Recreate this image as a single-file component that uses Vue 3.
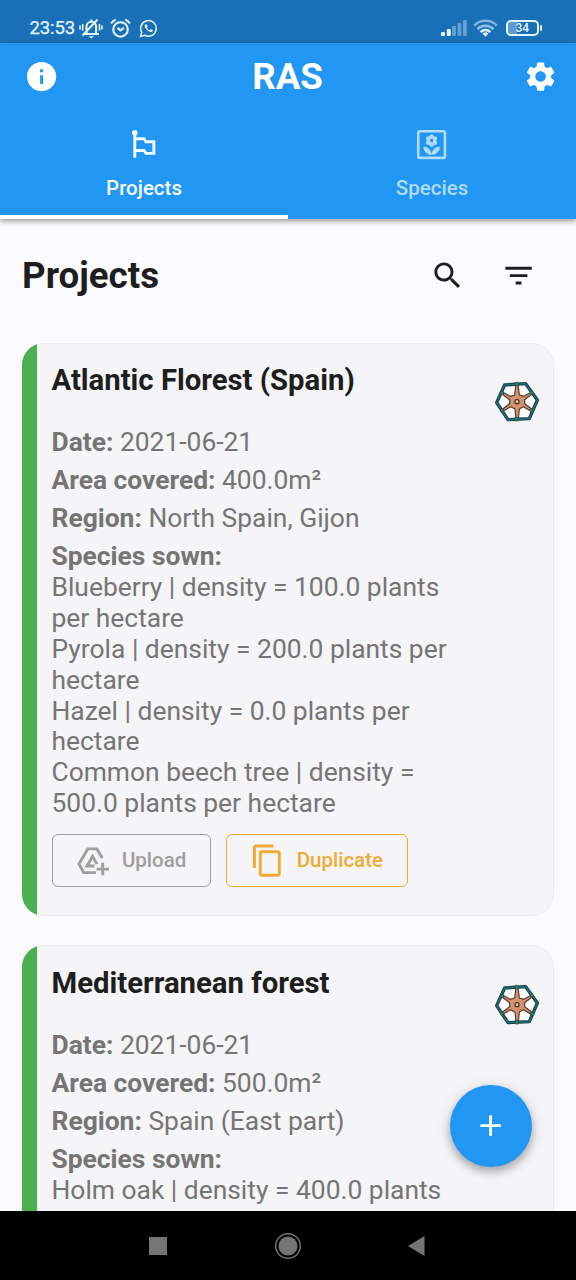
<script setup>
const projects = [
  {
    title: 'Atlantic Florest (Spain)',
    date: '2021-06-21',
    area: '400.0m²',
    region: 'North Spain, Gijon',
    species: [
      'Blueberry | density = 100.0 plants per hectare',
      'Pyrola | density = 200.0 plants per hectare',
      'Hazel | density = 0.0 plants per hectare',
      'Common beech tree | density = 500.0 plants per hectare',
    ],
    actions: true,
  },
  {
    title: 'Mediterranean forest',
    date: '2021-06-21',
    area: '500.0m²',
    region: 'Spain (East part)',
    species: ['Holm oak | density = 400.0 plants per hectare'],
    actions: false,
  },
]
const petals = [0, 60, 120, 180, 240, 300]
</script>

<template>
  <div class="screen">
    <div class="status">
      <span class="clock">23:53</span>
      <svg class="bell" viewBox="0 0 24 22" fill="none" stroke="currentColor" stroke-width="2">
        <path d="M5 17h15M7.500 16.500V9.500a4.800 4.800 0 0 1 9.600 0v7M12.300 4.500V2.500M3.500 18.500 18.500 2.500" />
        <path d="M1 8.500v4M3.700 7v6.500M20.500 7v6.500M23 8.500v4" stroke-width="1.600" />
        <path d="M9.500 19.300h5.600l-2.800 2.300z" fill="currentColor" stroke="none" />
      </svg>
      <svg class="alarm" viewBox="0 0 22 22" fill="none" stroke="currentColor" stroke-width="2.200">
        <circle cx="11" cy="12" r="7.600" />
        <path d="m7.800 10.300 3.200 2.700 3.500-2.700" />
        <path d="M1.200 5.700Q3 2.700 6 1.800M20.800 5.700Q19 2.700 16 1.800" />
      </svg>
      <svg class="whats" viewBox="0 0 20 20" fill="none" stroke="currentColor" stroke-width="1.600">
        <path d="m1.700 18.300 1.200-4.300a8.200 8.200 0 1 1 3.200 3.100z" />
        <path d="M7 5.500c-1.800 1.200-1 3.600 1.500 6s5 3.100 6 1.200l.1-1-2.200-1-1.200 1.200c-1.300-.5-2.300-1.500-2.900-2.800l.9-1-.9-2.400z" fill="currentColor" stroke="none" />
      </svg>
      <span class="grow"></span>
      <svg class="signal" viewBox="0 0 26 16" fill="currentColor">
        <rect x="0" y="12" width="4" height="4" rx="1" />
        <rect x="5.800" y="9" width="4" height="7" rx="1" />
        <g opacity=".38">
          <rect x="11.200" y="6" width="3.700" height="10" rx="1" />
          <rect x="16.600" y="3" width="3.700" height="13" rx="1" />
          <rect x="22" y="0" width="3.700" height="16" rx="1" />
        </g>
      </svg>
      <svg class="wifi" viewBox="0 0 26 18" fill="none" stroke="currentColor" stroke-width="2.600">
        <path d="M1.200 6.500a16.500 16.500 0 0 1 23.600 0" opacity=".5" />
        <path d="M4.700 10.100a11.600 11.600 0 0 1 16.600 0" opacity=".6" />
        <path d="M8 13.300a7 7 0 0 1 10 0" />
        <path d="m13 18-3-3a4.300 4.300 0 0 1 6 0z" fill="currentColor" stroke="none" />
      </svg>
      <span class="battery"><span>34</span></span>
      <i class="nub"></i>
    </div>

    <header class="appbar">
      <div class="titlebar">
        <svg class="icon" viewBox="0 0 24 24"><path d="M12 2C6.480 2 2 6.480 2 12s4.480 10 10 10 10-4.480 10-10S17.520 2 12 2zm1 15h-2v-6h2v6zm0-8h-2V7h2v2z" /></svg>
        <h1>RAS</h1>
        <svg class="icon" viewBox="0 0 24 24"><path d="M19.140 12.940c.04-.3.06-.61.06-.94 0-.32-.02-.64-.07-.94l2.030-1.580c.18-.14.23-.41.12-.61l-1.920-3.320c-.12-.22-.37-.29-.59-.22l-2.390.96c-.5-.38-1.030-.7-1.620-.94l-.36-2.540c-.04-.24-.24-.41-.48-.41h-3.840c-.24 0-.43.17-.47.41l-.36 2.540c-.59.24-1.130.57-1.620.94l-2.390-.96c-.22-.08-.47 0-.59.22L2.740 8.870c-.12.21-.08.47.12.61l2.030 1.580c-.05.3-.09.63-.09.94s.02.64.07.94l-2.030 1.580c-.18.14-.23.41-.12.61l1.920 3.320c.12.22.37.29.59.22l2.390-.96c.5.38 1.030.7 1.620.94l.36 2.540c.05.24.24.41.48.41h3.840c.24 0 .44-.17.47-.41l.36-2.540c.59-.24 1.130-.56 1.620-.94l2.390.96c.22.08.47 0 .59-.22l1.920-3.320c.12-.22.07-.47-.12-.61l-2.010-1.580zM12 15.600c-1.980 0-3.600-1.620-3.600-3.600s1.620-3.600 3.600-3.600 3.600 1.620 3.600 3.600-1.620 3.600-3.600 3.600z" /></svg>
      </div>
      <nav class="tabs">
        <div class="tab active">
          <svg class="icon" viewBox="0 0 24 24"><path d="M14 9l-1-2H7V5.720c.6-.34 1-.98 1-1.720 0-1.100-.9-2-2-2s-2 .9-2 2c0 .74.4 1.380 1 1.720V21h2v-4h5l1 2h7V9h-6zm4 8h-4l-1-2H7V9h5l1 2h5v6z" /></svg>
          <span>Projects</span>
        </div>
        <div class="tab">
          <svg class="icon" viewBox="0 0 24 24">
            <rect x="2.900" y="2.900" width="18.200" height="18.200" rx="1" fill="none" stroke="currentColor" stroke-width="1.800" />
            <circle v-for="a in petals" :key="a" cx="12" cy="6.700" r="1.550" :transform="`rotate(${a} 12 9.300)`" />
            <path fill-rule="evenodd" d="M12 6.300a3 3 0 1 0 0 6 3 3 0 0 0 0-6zm0 1.600a1.400 1.400 0 1 1 0 2.800 1.400 1.400 0 0 1 0-2.800z" />
            <path d="M12 18.900c0-3.100-2.500-5.500-5.600-5.500 0 3.100 2.500 5.500 5.600 5.500zM12 18.900c3.100 0 5.600-2.400 5.600-5.500-3.100 0-5.600 2.400-5.600 5.500z" />
          </svg>
          <span>Species</span>
        </div>
      </nav>
    </header>

    <main>
      <div class="heading">
        <h2>Projects</h2>
        <svg class="icon" viewBox="0 0 24 24"><path d="M15.500 14h-.79l-.28-.27C15.410 12.590 16 11.110 16 9.500 16 5.910 13.090 3 9.500 3S3 5.910 3 9.500 5.910 16 9.500 16c1.610 0 3.090-.59 4.230-1.570l.27.28v.79l5 4.990L20.490 19l-4.990-5zm-6 0C7.010 14 5 11.990 5 9.500S7.010 5 9.500 5 14 7.010 14 9.500 11.990 14 9.500 14z" /></svg>
        <svg class="icon" viewBox="0 0 24 24"><path d="M10 18h4v-2h-4v2zM3 6v2h18V6H3zm3 7h12v-2H6v2z" /></svg>
      </div>

      <article v-for="p in projects" :key="p.title" class="card">
        <div class="info">
          <h3>{{ p.title }}</h3>
          <p class="row"><b>Date:</b> {{ p.date }}</p>
          <p class="row"><b>Area covered:</b> {{ p.area }}</p>
          <p class="row"><b>Region:</b> {{ p.region }}</p>
          <p><b>Species sown:</b></p>
          <p v-for="s in p.species" :key="s">{{ s }}</p>
          <div v-if="p.actions" class="actions">
            <div class="btn upload">
              <svg class="icon" viewBox="0 0 24 24" fill="none" stroke="currentColor" stroke-width="2">
                <path d="M14.300 20.200H6L2.700 14.400 8.800 4h6.100l3.700 6.300" />
                <path d="M13.300 15.700H8.200L12 9.200l3 5.200" />
                <path d="M18.900 13.500V22M14.700 17.800h8.500" />
              </svg>
              <span>Upload</span>
            </div>
            <div class="btn duplicate">
              <svg class="icon" viewBox="0 0 24 24"><path d="M16 1H4c-1.100 0-2 .9-2 2v14h2V3h12V1zm3 4H8c-1.100 0-2 .9-2 2v14c0 1.100.9 2 2 2h11c1.100 0 2-.9 2-2V7c0-1.100-.9-2-2-2zm0 16H8V7h11v14z" /></svg>
              <span>Duplicate</span>
            </div>
          </div>
        </div>
        <svg class="wheel" viewBox="46 50 132 123" stroke-linejoin="round">
          <path d="M75 62 138 58 173 107 149 163 85 166 51 115z" fill="#fff" stroke="#173f4c" stroke-width="10" />
          <path d="M75 62 138 58 173 107 149 163 85 166 51 115z" fill="none" stroke="#23747c" stroke-width="3.500" />
          <path d="M109 60h6l4 32 14 4 21-12 3 5-22 17v12l22 17-3 6-23-14-12 7-3 30h-7l-3-30-13-7-22 13-3-5 22-17v-12L67 89l3-5 22 12 13-4z" fill="#d4936e" stroke="#51382c" stroke-width="3.500" />
          <circle cx="112" cy="112" r="6" fill="#f5d9a5" stroke="#38281f" stroke-width="3.500" />
          <g fill="#35876b" stroke="#174b4b" stroke-width="2">
            <rect x="107" y="54" width="9" height="10" /><rect x="107" y="160" width="9" height="10" />
            <circle cx="156" cy="85" r="5" /><circle cx="157" cy="139" r="5" /><circle cx="67" cy="139" r="5" /><circle cx="67" cy="86" r="5" />
          </g>
        </svg>
      </article>
    </main>

    <div class="fab"><svg class="icon" viewBox="0 0 24 24"><path d="M19 13h-6v6h-2v-6H5v-2h6V5h2v6h6v2z" /></svg></div>

    <footer class="sysnav">
      <svg viewBox="0 0 28 28"><rect x="5" y="5" width="18" height="18" /></svg>
      <svg viewBox="0 0 28 28"><circle cx="14" cy="14" r="9.500" /><circle cx="14" cy="14" r="12.300" fill="none" stroke="#757575" stroke-width="1.400" /></svg>
      <svg viewBox="0 0 28 28"><path d="M20.500 4v20L4 14z" /></svg>
    </footer>
  </div>
</template>

<style scoped>
.screen {
  position: relative;
  width: 576px;
  height: 1280px;
  overflow: hidden;
  display: flex;
  flex-direction: column;
  background: #fbfafc;
  font-family: Roboto, sans-serif;
  color: #1e1e20;
}
h1, h2, h3, p { margin: 0; }
.icon { width: 35.2px; height: 35.2px; flex: none; display: block; fill: currentColor; }
.status {
  height: 43px;
  box-sizing: border-box;
  flex: none;
  display: flex;
  align-items: center;
  padding: 13px 34px 0 29.500px;
  background: #1a70b7;
  color: #e2f5ff;
}
.clock { font-size: 18.500px; font-weight: 400; width: 49px; line-height: 20px; letter-spacing: -0.1px; white-space: nowrap; -webkit-text-stroke: 0.25px currentColor; }
.bell { width: 24px; height: 22px; }
.alarm { width: 21px; height: 21px; margin-left: 7.500px; }
.whats { width: 19px; height: 19px; margin-left: 8px; }
.grow { flex: 1; }
.signal { width: 26px; height: 16px; }
.wifi { width: 25px; height: 18px; margin: 0 8px 0 6px; }
.battery {
  width: 33.500px;
  height: 16.500px;
  box-sizing: border-box;
  border: 2px solid currentColor;
  border-radius: 5px;
  display: flex;
  align-items: center;
  justify-content: center;
  font-size: 12px;
  font-weight: 500;
  background: linear-gradient(90deg, #5c9bd0 9px, transparent 9px);
}
.nub { width: 2px; height: 6px; margin-left: 1px; border-radius: 1px; background: currentColor; }
.appbar {
  height: 176px;
  flex: none;
  background: #2196f3;
  color: #fff;
  z-index: 1;
  box-shadow: 0 2px 6px rgba(0, 0, 0, .4);
  display: flex;
  flex-direction: column;
}
.titlebar { height: 67px; display: flex; align-items: center; justify-content: space-between; padding: 0 18px 0 23.500px; }
h1 { font-size: 36.700px; font-weight: 700; line-height: 43px; margin-right: 6.500px; }
.tabs { flex: 1; display: flex; }
.tab {
  flex: 1;
  display: flex;
  flex-direction: column;
  align-items: center;
  padding-top: 16.500px;
  gap: 14px;
  color: #b0dcfa;
  font-size: 20.500px;
  font-weight: 500;
  line-height: 24px;
  border-bottom: 4px solid transparent;
}
.tab.active { color: #f4fcff; border-bottom-color: #fff; }
main { flex: 1; min-height: 0; overflow: hidden; padding: 0 22px; }
.heading { height: 123.500px; box-sizing: border-box; display: flex; align-items: center; padding: 0 18px 10px 0; gap: 35.500px; }
h2 { flex: 1; font-size: 36.700px; font-weight: 700; line-height: 43px; }
.card {
  width: 532px;
  box-sizing: border-box;
  display: flex;
  justify-content: space-between;
  padding: 20.500px 15px 29px 29.500px;
  margin-bottom: 29.500px;
  border-radius: 22px;
  background: linear-gradient(90deg, #4caf50 15px, transparent 15px), #f5f4f6;
  box-shadow: inset 0 0 0 1px rgba(0, 0, 0, .035);
}
.info { width: 416px; font-size: 26.400px; line-height: 30.850px; color: #757575; }
h3 { font-size: 29.300px; line-height: 34.500px; font-weight: 700; color: #1e1e20; margin-bottom: 29.200px; }
.row { margin-bottom: 7.400px; }
b { font-weight: 700; }
.wheel { width: 44px; height: 41px; margin-top: 18px; flex: none; }
.actions { display: flex; gap: 15px; margin-top: 15px; }
.btn {
  height: 53px;
  box-sizing: border-box;
  display: flex;
  align-items: center;
  gap: 11.700px;
  padding: 0 24px 0 22.500px;
  border: 1.500px solid currentColor;
  border-radius: 6px;
  font-size: 20.500px;
  font-weight: 500;
}
.upload { color: #9e9e9e; }
.upload .icon { fill: none; }
.duplicate { color: #efac35; }
.fab {
  position: absolute;
  left: 450px;
  top: 1085px;
  width: 82px;
  height: 82px;
  border-radius: 50%;
  display: flex;
  align-items: center;
  justify-content: center;
  background: #2196f3;
  color: #fff;
  box-shadow: 0 5px 8px rgba(0, 0, 0, .26), 0 2px 15px rgba(0, 0, 0, .13);
}
.sysnav {
  height: 69px;
  flex: none;
  display: flex;
  align-items: center;
  justify-content: center;
  gap: 102px;
  background: #000;
}
.sysnav svg { width: 28px; height: 28px; fill: #757575; }
</style>

<style>
body { margin: 0; }
</style>
